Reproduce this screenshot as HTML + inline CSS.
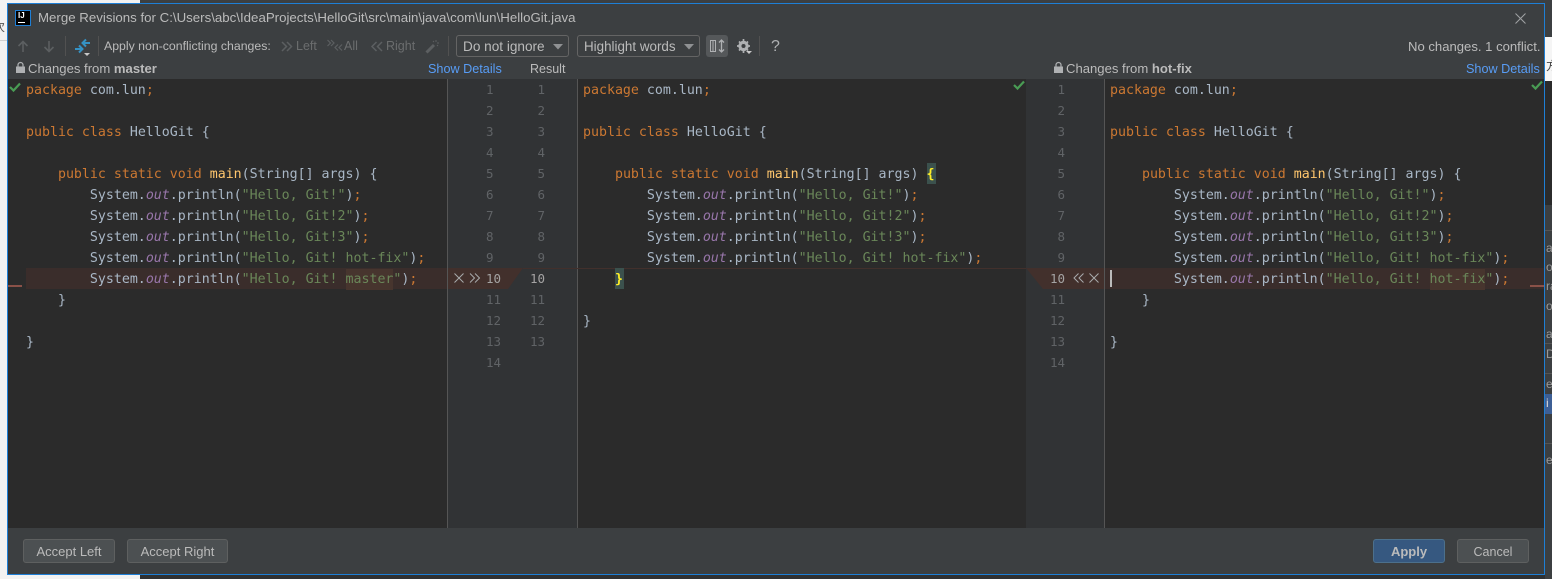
<!DOCTYPE html>
<html><head><meta charset="utf-8">
<style>
html,body{margin:0;padding:0;background:#f2f2f2}
#r{position:relative;width:1552px;height:579px;overflow:hidden;background:#f2f2f2;font-family:"Liberation Sans","Noto Sans CJK SC",sans-serif;font-size:12.5px;color:#bbb}
.a{position:absolute}
.t{position:absolute;white-space:nowrap;line-height:16px}
pre{position:absolute;margin:0;font-family:"DejaVu Sans Mono",monospace;font-size:13.28px;line-height:21px;color:#a9b7c6}
pre.n{color:#606366;text-align:right}
.k{color:#cc7832}.s{color:#6a8759}.m{color:#ffc66d}.o{color:#9876aa;font-style:italic}
.h{background:#47352e;display:inline-block;line-height:21px}
.hl{color:#a4a3a3}
.cb{position:absolute;top:35px;height:20px;border:1px solid #646464;border-radius:3px;line-height:21px;color:#bbb;padding-left:6px;box-sizing:content-box}
.btn{position:absolute;top:539px;height:22px;border:1px solid #5e6060;border-radius:3px;background:#4c5052;color:#bbb;text-align:center;line-height:24px;font-size:13px}
.sep{position:absolute;top:36px;width:1px;height:20px;background:#515151}
.dis{color:#6b6d6e}
.frag{position:absolute;left:1546px;color:#9a9a9a;font-size:12px;line-height:14px;white-space:nowrap}
a{color:#589df6;text-decoration:none}
svg{position:absolute;overflow:visible}
</style></head><body><div id="r">

<div class="a" style="left:140px;top:0;width:1412px;height:3px;background:#3c3f41"></div>
<div class="a" style="left:140px;top:575px;width:1412px;height:4px;background:#2f3133"></div>
<div class="a" style="left:0;top:40px;width:7px;height:1px;background:#d0d0d0"></div>
<div class="t" style="left:-7px;top:19px;font-size:12px;color:#555;font-family:'Noto Sans CJK SC',sans-serif">次</div>
<div class="a" style="left:1545px;top:0;width:7px;height:37px;background:#3c3f41"></div>
<div class="a" style="left:1545px;top:37px;width:7px;height:44px;background:#f5f5f5"></div>
<div class="t" style="left:1546px;top:58px;font-size:12px;color:#444;font-family:'Noto Sans CJK SC',sans-serif">方</div>
<div class="a" style="left:1545px;top:81px;width:7px;height:124px;background:#2b2b2b"></div>
<div class="a" style="left:1545px;top:205px;width:7px;height:374px;background:#3c3f41"></div>
<div class="a" style="left:1545px;top:394px;width:7px;height:20px;background:#3d5f95"></div>
<div class="a" style="left:1545px;top:230px;width:7px;height:1px;background:#555"></div>
<div class="a" style="left:1545px;top:343px;width:7px;height:1px;background:#555"></div>
<div class="a" style="left:1545px;top:373px;width:7px;height:1px;background:#555"></div>
<div class="a" style="left:1545px;top:443px;width:7px;height:1px;background:#555"></div>
<div class="frag" style="top:241px">as</div>
<div class="frag" style="top:260px">on</div>
<div class="frag" style="top:279px">ra</div>
<div class="frag" style="top:299px">ou</div>
<div class="frag" style="top:327px">an</div>
<div class="frag" style="top:347px">D</div>
<div class="frag" style="top:377px">e</div>
<div class="frag" style="top:396px;color:#ddd">i</div>
<div class="frag" style="top:453px">e</div>

<!-- dialog -->
<div class="a" style="left:7px;top:3px;width:1536px;height:570px;border:1px solid #1e7fd6;background:#3c3f41"></div>

<!-- title bar -->
<div class="a" style="left:15px;top:10px;width:16px;height:16px;background:#000;border:1px solid #1e7fd6;box-sizing:border-box"></div>
<div class="t" style="left:18px;top:10px;color:#fff;font:bold 8px/11px 'Liberation Sans',sans-serif">IJ</div>
<div class="a" style="left:18px;top:22px;width:7px;height:1px;background:#fff"></div>
<div class="t" style="left:38px;top:10px;font-size:13.27px;color:#bbb">Merge Revisions for C:\Users\abc\IdeaProjects\HelloGit\src\main\java\com\lun\HelloGit.java</div>
<svg style="left:1515px;top:13px" width="11" height="11"><path d="M.5.5l10 10M10.500.5l-10 10" stroke="#a0a2a4" fill="none"/></svg>

<!-- toolbar -->
<svg style="left:17px;top:40px" width="12" height="13"><path d="M6 12V1.500M1.500 6L6 1.500 10.500 6" stroke="#5c5f61" stroke-width="1.600" fill="none"/></svg>
<svg style="left:43px;top:40px" width="12" height="13"><path d="M6 1v10.500M1.500 7L6 11.500 10.500 7" stroke="#5c5f61" stroke-width="1.600" fill="none"/></svg>
<div class="sep" style="left:65px"></div>
<svg style="left:74px;top:38px" width="18" height="18"><path d="M1 11h7M5 7.500l3.500 3.500L5 14.500" stroke="#3592c4" stroke-width="2" fill="none"/><path d="M16 5H9M12 1.500L8.500 5 12 8.500" stroke="#3592c4" stroke-width="2" fill="none"/><path d="M10 15h6l-3 3z" fill="#c8c8c8"/></svg>
<div class="sep" style="left:98px"></div>
<div class="t" style="left:104px;top:38px;font-size:12.3px;color:#bbb">Apply non-conflicting changes:</div>
<svg style="left:281px;top:41px" width="12" height="11"><path d="M1 1l4.500 4.500L1 10M6 1l4.500 4.500L6 10" stroke="#5c5f61" stroke-width="1.500" fill="none"/></svg>
<div class="t dis" style="left:296px;top:38px;font-size:12.5px">Left</div>
<svg style="left:327px;top:39px" width="16" height="13"><path d="M.5 1l3 3-3 3M4 1l3 3-3 3" stroke="#5c5f61" stroke-width="1.200" fill="none"/><path d="M11 5.500l-3 3 3 3M15 5.500l-3 3 3 3" stroke="#5c5f61" stroke-width="1.200" fill="none"/></svg>
<div class="t dis" style="left:344px;top:38px;font-size:12.5px">All</div>
<svg style="left:371px;top:41px" width="12" height="11"><path d="M5.500 1L1 5.500 5.500 10M11 1L6.500 5.500 11 10" stroke="#5c5f61" stroke-width="1.500" fill="none"/></svg>
<div class="t dis" style="left:386px;top:38px;font-size:12.5px">Right</div>
<svg style="left:425px;top:39px" width="15" height="15"><path d="M1.500 13.500L9 6" stroke="#5c5f61" stroke-width="3" fill="none"/><path d="M11 1v2M14 4h-2M13 7l-1-1M8 2l1 1" stroke="#5c5f61" fill="none"/></svg>
<div class="sep" style="left:448px"></div>

<div class="cb" style="left:456px;width:105px;font-size:13.6px">Do not ignore</div>
<svg style="left:553px;top:44px" width="10" height="6"><path d="M0 0h10L5 5.500z" fill="#8f9193"/></svg>
<div class="cb" style="left:577px;width:115px;font-size:13.4px">Highlight words</div>
<svg style="left:684px;top:44px" width="10" height="6"><path d="M0 0h10L5 5.500z" fill="#8f9193"/></svg>

<div class="a" style="left:706px;top:35px;width:22px;height:22px;background:#55585a;border-radius:3px"></div>
<svg style="left:710px;top:39px" width="15" height="14"><path d="M.5 1.500h5v11h-5zM3 1.500v11" stroke="#afb1b3" fill="none"/><path d="M11.500 1v12M9 3.500L11.500 1 14 3.500M9 10.500l2.500 2.500 2.500-2.500" stroke="#afb1b3" stroke-width="1.300" fill="none"/></svg>
<svg style="left:737px;top:39px" width="15" height="16"><circle cx="6.500" cy="7" r="3.900" stroke="#afb1b3" stroke-width="2.600" fill="none"/><path d="M6.500 0v14M0 7h13M2 2.500l9 9M11 2.500l-9 9" stroke="#afb1b3" stroke-width="1.700"/><circle cx="6.500" cy="7" r="2" fill="#3c3f41"/><path d="M9 12h6l-3 3z" fill="#c8c8c8"/></svg>
<div class="sep" style="left:759px"></div>
<div class="t" style="left:771px;top:37px;font-size:16px;color:#afb1b3;line-height:19px">?</div>
<div class="t" style="left:1408px;top:39px;font-size:13.1px;color:#bbb">No changes. 1 conflict.</div>

<!-- header labels -->
<svg style="left:16px;top:62px" width="9" height="11"><path d="M0 4.500h9V11H0z" fill="#afb1b3"/><path d="M2 5V3a2.500 2.500 0 0 1 5 0v2" stroke="#afb1b3" fill="none" stroke-width="1.200"/></svg>
<div class="t" style="left:28px;top:61px;font-size:13.1px">Changes from <b>master</b></div>
<div class="t" style="left:428px;top:61px;font-size:12.65px"><a>Show Details</a></div>
<div class="t" style="left:530px;top:61px;font-size:12.500px">Result</div>
<svg style="left:1054px;top:62px" width="9" height="11"><path d="M0 4.500h9V11H0z" fill="#afb1b3"/><path d="M2 5V3a2.500 2.500 0 0 1 5 0v2" stroke="#afb1b3" fill="none" stroke-width="1.200"/></svg>
<div class="t" style="left:1066px;top:61px;font-size:13.1px">Changes from <b>hot-fix</b></div>
<div class="t" style="left:1466px;top:61px;font-size:12.65px"><a>Show Details</a></div>

<!-- editor area -->
<div class="a" style="left:8px;top:79px;width:1536px;height:449px;background:#2b2b2b"></div>
<div class="a" style="left:448px;top:79px;width:129px;height:449px;background:#313335"></div>
<div class="a" style="left:1026px;top:79px;width:78px;height:449px;background:#313335"></div>
<div class="a" style="left:447px;top:79px;width:1px;height:449px;background:#555"></div>
<div class="a" style="left:577px;top:79px;width:1px;height:449px;background:#555"></div>
<div class="a" style="left:1104px;top:79px;width:1px;height:449px;background:#555"></div>

<!-- conflict bands -->
<div class="a" style="left:26px;top:268px;width:421px;height:21px;background:#3a2d2b"></div>
<div class="a" style="left:1105px;top:268px;width:439px;height:21px;background:#3a2d2b"></div>
<svg style="left:448px;top:268px" width="130" height="21"><path d="M0 0H75L60 21H0z" fill="#42302c"/><path d="M75 0H130V1H75z" fill="#42302c"/></svg>
<div class="a" style="left:578px;top:268px;width:448px;height:1px;background:#42302c"></div>
<svg style="left:1026px;top:268px" width="78" height="21"><path d="M0 0H78V21H17z" fill="#42302c"/></svg>
<div class="a" style="left:8px;top:285px;width:14px;height:2px;background:#8a5148"></div>
<div class="a" style="left:1530px;top:285px;width:14px;height:2px;background:#8a5148"></div>
<div class="a" style="left:1110px;top:270px;width:2px;height:17px;background:#bbb"></div>

<!-- checks -->
<svg style="left:9px;top:82px" width="12" height="10"><path d="M1 5l3.500 3.500L11 1.500" stroke="#499c54" stroke-width="2.200" fill="none"/></svg>
<svg style="left:1013px;top:80px" width="12" height="10"><path d="M1 5l3.500 3.500L11 1.500" stroke="#499c54" stroke-width="2.200" fill="none"/></svg>
<svg style="left:1531px;top:80px" width="12" height="10"><path d="M1 5l3.500 3.500L11 1.500" stroke="#499c54" stroke-width="2.200" fill="none"/></svg>

<!-- left code -->
<pre style="left:26px;top:80px"><span class="k">package</span> com.lun<span class="k">;</span>

<span class="k">public class</span> HelloGit {

    <span class="k">public static void</span> <span class="m">main</span>(String[] args) {
        System.<span class="o">out</span>.println(<span class="s">"Hello, Git!"</span>)<span class="k">;</span>
        System.<span class="o">out</span>.println(<span class="s">"Hello, Git!2"</span>)<span class="k">;</span>
        System.<span class="o">out</span>.println(<span class="s">"Hello, Git!3"</span>)<span class="k">;</span>
        System.<span class="o">out</span>.println(<span class="s">"Hello, Git! hot-fix"</span>)<span class="k">;</span>
        System.<span class="o">out</span>.println(<span class="s">"Hello, Git! <span class="h">master</span>"</span>)<span class="k">;</span>
    }

}</pre>

<!-- result code -->
<div class="a" style="left:615px;top:268px;width:9px;height:21px;background:#3b514d"></div>
<div class="a" style="left:927px;top:163px;width:9px;height:21px;background:#3b514d"></div>
<pre style="left:583px;top:80px"><span class="k">package</span> com.lun<span class="k">;</span>

<span class="k">public class</span> HelloGit {

    <span class="k">public static void</span> <span class="m">main</span>(String[] args) <span style="color:#ffef28;font-weight:bold">{</span>
        System.<span class="o">out</span>.println(<span class="s">"Hello, Git!"</span>)<span class="k">;</span>
        System.<span class="o">out</span>.println(<span class="s">"Hello, Git!2"</span>)<span class="k">;</span>
        System.<span class="o">out</span>.println(<span class="s">"Hello, Git!3"</span>)<span class="k">;</span>
        System.<span class="o">out</span>.println(<span class="s">"Hello, Git! hot-fix"</span>)<span class="k">;</span>
    <span style="color:#ffef28;font-weight:bold">}</span>

}</pre>

<!-- right code -->
<pre style="left:1110px;top:80px"><span class="k">package</span> com.lun<span class="k">;</span>

<span class="k">public class</span> HelloGit {

    <span class="k">public static void</span> <span class="m">main</span>(String[] args) {
        System.<span class="o">out</span>.println(<span class="s">"Hello, Git!"</span>)<span class="k">;</span>
        System.<span class="o">out</span>.println(<span class="s">"Hello, Git!2"</span>)<span class="k">;</span>
        System.<span class="o">out</span>.println(<span class="s">"Hello, Git!3"</span>)<span class="k">;</span>
        System.<span class="o">out</span>.println(<span class="s">"Hello, Git! hot-fix"</span>)<span class="k">;</span>
        System.<span class="o">out</span>.println(<span class="s">"Hello, Git! <span class="h">hot-fix</span>"</span>)<span class="k">;</span>
    }

}</pre>

<!-- gutters -->
<pre class="n" style="left:486px;top:79px;text-align:left;font-size:12.500px">1
2
3
4
5
6
7
8
9
<span class="hl">10</span>
11
12
13
14</pre>
<pre class="n" style="left:525px;top:79px;width:20px;font-size:12.500px">1
2
3
4
5
6
7
8
9
<span class="hl">10</span>
11
12
13</pre>
<pre class="n" style="left:1045px;top:79px;width:20px;font-size:12.500px">1
2
3
4
5
6
7
8
9
<span class="hl">10</span>
11
12
13
14</pre>

<!-- conflict actions -->
<svg style="left:454px;top:273px" width="10" height="10"><path d="M.5.500l9 9M9.500.500l-9 9" stroke="#a8aaac" fill="none"/></svg>
<svg style="left:469px;top:273px" width="12" height="10"><path d="M1 .5L5.500 5 1 9.500M6 .5L10.500 5 6 9.500" stroke="#a8aaac" fill="none"/></svg>
<svg style="left:1073px;top:273px" width="12" height="10"><path d="M5.500.5L1 5l4.500 4.500M10.500.5L6 5l4.500 4.500" stroke="#a8aaac" fill="none"/></svg>
<svg style="left:1089px;top:273px" width="10" height="10"><path d="M.5.500l9 9M9.500.500l-9 9" stroke="#a8aaac" fill="none"/></svg>

<!-- footer buttons -->
<div class="btn" style="left:23px;width:90px">Accept Left</div>
<div class="btn" style="left:127px;width:99px">Accept Right</div>
<div class="btn" style="left:1373px;width:70px;background:#365880;border-color:#4c708c;font-weight:bold">Apply</div>
<div class="btn" style="left:1457px;width:70px;font-size:12.500px">Cancel</div>

</div></body></html>
